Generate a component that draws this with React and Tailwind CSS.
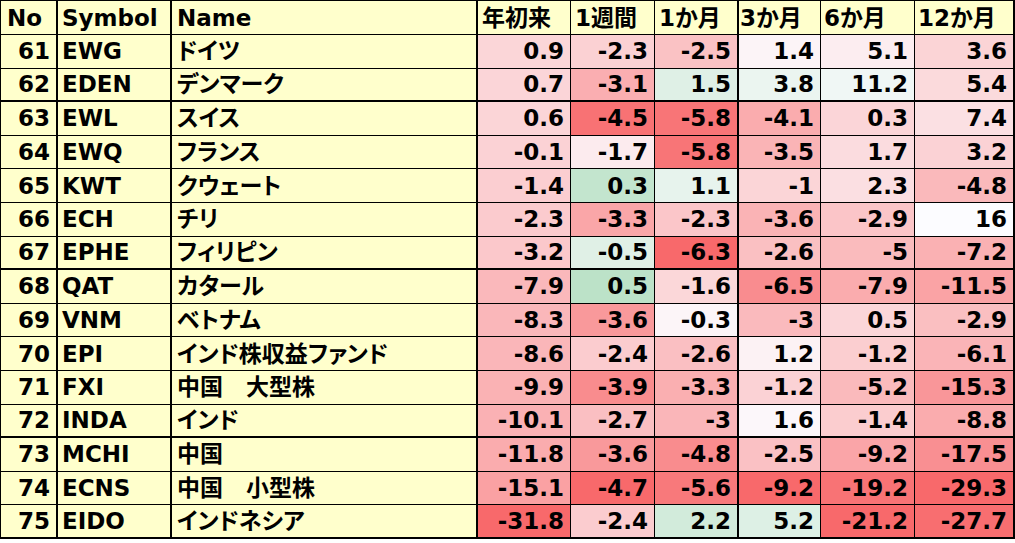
import React from 'react';

// No, Symbol, Name, 年初来, 1週間, 1か月, 3か月, 6か月, 12か月
const rows = [
  [61, 'EWG', 'ドイツ', '0.9', '-2.3', '-2.5', '1.4', '5.1', '3.6'],
  [62, 'EDEN', 'デンマーク', '0.7', '-3.1', '1.5', '3.8', '11.2', '5.4'],
  [63, 'EWL', 'スイス', '0.6', '-4.5', '-5.8', '-4.1', '0.3', '7.4'],
  [64, 'EWQ', 'フランス', '-0.1', '-1.7', '-5.8', '-3.5', '1.7', '3.2'],
  [65, 'KWT', 'クウェート', '-1.4', '0.3', '1.1', '-1', '2.3', '-4.8'],
  [66, 'ECH', 'チリ', '-2.3', '-3.3', '-2.3', '-3.6', '-2.9', '16'],
  [67, 'EPHE', 'フィリピン', '-3.2', '-0.5', '-6.3', '-2.6', '-5', '-7.2'],
  [68, 'QAT', 'カタール', '-7.9', '0.5', '-1.6', '-6.5', '-7.9', '-11.5'],
  [69, 'VNM', 'ベトナム', '-8.3', '-3.6', '-0.3', '-3', '0.5', '-2.9'],
  [70, 'EPI', 'インド株収益ファンド', '-8.6', '-2.4', '-2.6', '1.2', '-1.2', '-6.1'],
  [71, 'FXI', '中国　大型株', '-9.9', '-3.9', '-3.3', '-1.2', '-5.2', '-15.3'],
  [72, 'INDA', 'インド', '-10.1', '-2.7', '-3', '1.6', '-1.4', '-8.8'],
  [73, 'MCHI', '中国', '-11.8', '-3.6', '-4.8', '-2.5', '-9.2', '-17.5'],
  [74, 'ECNS', '中国　小型株', '-15.1', '-4.7', '-5.6', '-9.2', '-19.2', '-29.3'],
  [75, 'EIDO', 'インドネシア', '-31.8', '-2.4', '2.2', '5.2', '-21.2', '-27.7'],
];

// colour scale per column (red - white - green, as in the spreadsheet)
const scales = [
  { min: -31.8, mid: 12.4, max: 40 },
  { min: -4.7, mid: -1.3, max: 3 },
  { min: -6.3, mid: 0, max: 8 },
  { min: -9.2, mid: 2, max: 18 },
  { min: -21.2, mid: 8, max: 50 },
  { min: -29.3, mid: 16, max: 60 },
];

const WHITE = [252, 252, 255];
const RED = [248, 105, 107];
const GREEN = [99, 190, 123];

function cellColor(value, { min, mid, max }) {
  const v = parseFloat(value);
  let target = RED;
  let t = 0;
  if (v < mid) {
    t = Math.min(1, (mid - v) / (mid - min));
  } else {
    target = GREEN;
    t = Math.min(1, (v - mid) / (max - mid));
  }
  const c = WHITE.map((w, i) => Math.round(w + (target[i] - w) * t));
  return `rgb(${c[0]},${c[1]},${c[2]})`;
}

const headers = [
  { label: 'No', pad: 'pl-[6px]' },
  { label: 'Symbol', pad: 'pl-[4px]' },
  { label: 'Name', pad: 'pl-[5px]' },
  { label: '年初来', pad: 'pl-[4px]' },
  { label: '1週間', pad: 'pl-[4px]' },
  { label: '1か月', pad: 'pl-[4px]' },
  { label: '3か月', pad: 'pl-[1px]' },
  { label: '6か月', pad: 'pl-[3px]' },
  { label: '12か月', pad: 'pl-[3px]' },
];

// right border weight per column
const rightBorder = [
  'border-r-2',
  'border-r-2',
  'border-r-2',
  'border-r',
  'border-r',
  'border-r-2',
  'border-r',
  'border-r',
  'border-r-2',
];

const thickAfter = [1, 6, 11, 14];

export default function App() {
  return (
    <div className="w-[1015px] h-[543px] bg-white text-black text-[23px] font-bold leading-none font-['DejaVu_Sans','Noto_Sans_CJK_JP',sans-serif] [font-feature-settings:'palt']">
      <div className="grid grid-cols-[57px_114px_306px_93px_84px_84px_82px_94px_100px] grid-rows-[34px_repeat(15,33.6px)] border-t border-l border-black">
        {/* header */}
        {headers.map((h, i) => (
          <div
            key={h.label}
            className={`flex items-center pt-[2px] bg-[#ffffcc] border-b border-black ${rightBorder[i]} ${h.pad}`}
          >
            {h.label}
          </div>
        ))}

        {/* body */}
        {rows.map((row, r) => {
          const bottom = thickAfter.includes(r) ? 'border-b-2' : 'border-b';
          return (
            <React.Fragment key={row[0]}>
              <div className={`flex items-center justify-end pr-[6px] pt-[1px] bg-[#ffffcc] border-black ${bottom} ${rightBorder[0]}`}>
                {row[0]}
              </div>
              <div className={`flex items-center pl-[4px] pt-[1px] bg-[#ffffcc] border-black ${bottom} ${rightBorder[1]}`}>
                {row[1]}
              </div>
              <div className={`flex items-center pl-[5px] pt-[1px] bg-[#ffffcc] border-black whitespace-pre ${bottom} ${rightBorder[2]}`}>
                {row[2]}
              </div>
              {row.slice(3).map((val, c) => (
                <div
                  key={c}
                  className={`flex items-center justify-end pr-[6px] pt-[1px] border-black ${bottom} ${rightBorder[c + 3]}`}
                  style={{ backgroundColor: cellColor(val, scales[c]) }}
                >
                  {val}
                </div>
              ))}
            </React.Fragment>
          );
        })}
      </div>
    </div>
  );
}
